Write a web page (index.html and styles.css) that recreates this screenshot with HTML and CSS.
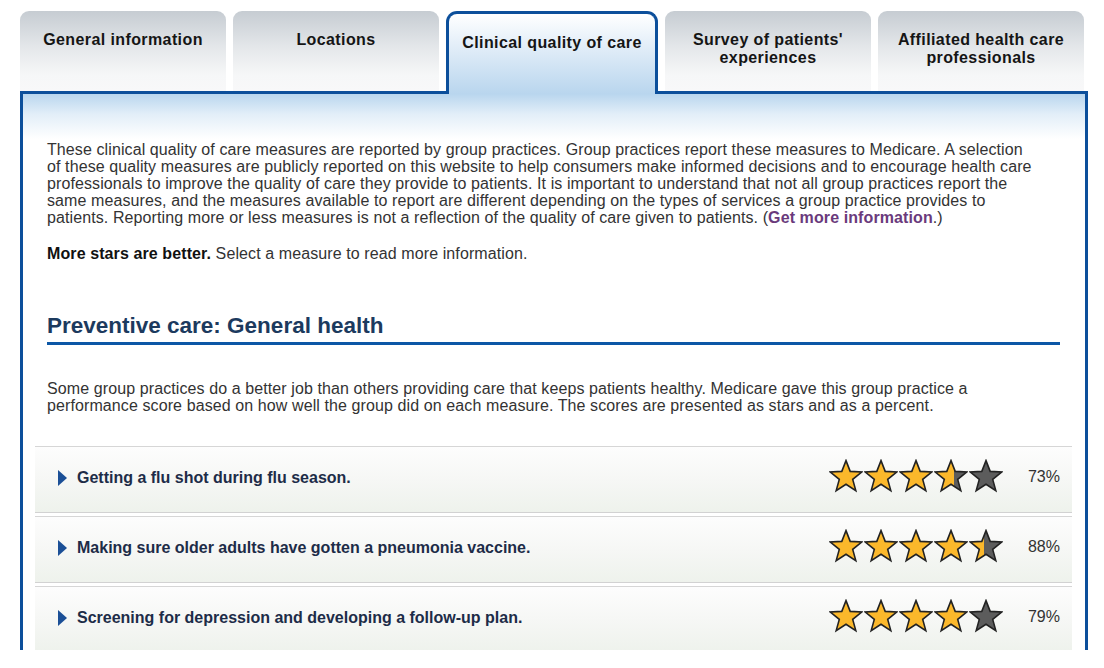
FILE: index.html
```html
<!DOCTYPE html>
<html lang="en">
<head>
<meta charset="utf-8">
<title>Clinical quality of care</title>
<link rel="stylesheet" href="styles.css">
</head>
<body>
<svg class="defs" width="0" height="0" aria-hidden="true">
  <defs>
    <polygon id="star-shape" points="17,1.6 21.2,12.4 32.7,13 23.7,20.4 26.8,31.6 17,25.3 7.2,31.6 10.3,20.4 1.3,13 12.8,12.4"/>
    <linearGradient id="fill-60" x1="0" x2="1" y1="0" y2="0">
      <stop offset="0.6" stop-color="#fbb82b"/><stop offset="0.6" stop-color="#5c5c5c"/>
    </linearGradient>
    <linearGradient id="fill-45" x1="0" x2="1" y1="0" y2="0">
      <stop offset="0.45" stop-color="#fbb82b"/><stop offset="0.45" stop-color="#5c5c5c"/>
    </linearGradient>
  </defs>
</svg>
<div class="page">
  <nav class="tabs">
    <div class="tab">General information</div>
    <div class="tab">Locations</div>
    <div class="tab active">Clinical quality of care</div>
    <div class="tab">Survey of patients'<br>experiences</div>
    <div class="tab">Affiliated health care<br>professionals</div>
  </nav>
  <section class="panel">
    <div class="intro">
      <p class="lead">These clinical quality of care measures are reported by group practices. Group practices report these measures to Medicare. A selection of these quality measures are publicly reported on this website to help consumers make informed decisions and to encourage health care professionals to improve the quality of care they provide to patients. It is important to understand that not all group practices report the same measures, and the measures available to report are different depending on the types of services a group practice provides to patients. Reporting more or less measures is not a reflection of the quality of care given to patients. (<a class="more" href="#">Get more information</a>.)</p>
      <p class="hint"><strong>More stars are better.</strong> Select a measure to read more information.</p>
      <h2 class="heading">Preventive care: General health</h2>
      <p class="desc">Some group practices do a better job than others providing care that keeps patients healthy. Medicare gave this group practice a performance score based on how well the group did on each measure. The scores are presented as stars and as a percent.</p>
    </div>
    <div class="rows">
      <div class="row">
        <span class="caret"></span>
        <span class="label">Getting a flu shot during flu season.</span>
        <span class="stars">
          <svg class="star" viewBox="0 0 34 34"><use href="#star-shape" class="gold"/></svg>
          <svg class="star" viewBox="0 0 34 34"><use href="#star-shape" class="gold"/></svg>
          <svg class="star" viewBox="0 0 34 34"><use href="#star-shape" class="gold"/></svg>
          <svg class="star" viewBox="0 0 34 34"><use href="#star-shape" fill="url(#fill-60)" class="outline"/></svg>
          <svg class="star" viewBox="0 0 34 34"><use href="#star-shape" class="grey"/></svg>
        </span>
        <span class="pct">73%</span>
      </div>
      <div class="row">
        <span class="caret"></span>
        <span class="label">Making sure older adults have gotten a pneumonia vaccine.</span>
        <span class="stars">
          <svg class="star" viewBox="0 0 34 34"><use href="#star-shape" class="gold"/></svg>
          <svg class="star" viewBox="0 0 34 34"><use href="#star-shape" class="gold"/></svg>
          <svg class="star" viewBox="0 0 34 34"><use href="#star-shape" class="gold"/></svg>
          <svg class="star" viewBox="0 0 34 34"><use href="#star-shape" class="gold"/></svg>
          <svg class="star" viewBox="0 0 34 34"><use href="#star-shape" fill="url(#fill-45)" class="outline"/></svg>
        </span>
        <span class="pct">88%</span>
      </div>
      <div class="row">
        <span class="caret"></span>
        <span class="label">Screening for depression and developing a follow-up plan.</span>
        <span class="stars">
          <svg class="star" viewBox="0 0 34 34"><use href="#star-shape" class="gold"/></svg>
          <svg class="star" viewBox="0 0 34 34"><use href="#star-shape" class="gold"/></svg>
          <svg class="star" viewBox="0 0 34 34"><use href="#star-shape" class="gold"/></svg>
          <svg class="star" viewBox="0 0 34 34"><use href="#star-shape" class="gold"/></svg>
          <svg class="star" viewBox="0 0 34 34"><use href="#star-shape" class="grey"/></svg>
        </span>
        <span class="pct">79%</span>
      </div>
    </div>
  </section>
</div>
</body>
</html>
```
FILE: styles.css
```css
* { box-sizing: border-box; }
html, body { margin: 0; padding: 0; background: #fff; }
body { font-family: "Liberation Sans", Arial, sans-serif; color: #333; }
.defs { position: absolute; width: 0; height: 0; overflow: hidden; }

.page {
  height: 650px;
  overflow: hidden;
  padding: 11px 0 0 20px;
}

.tabs {
  display: flex;
  align-items: flex-start;
  gap: 7px;
  width: 1064px;
  height: 80px;
  position: relative;
  z-index: 2;
}
.tab {
  flex: 1 1 0;
  height: 80px;
  border-radius: 9px 9px 0 0;
  background: linear-gradient(to bottom, #c6ccd2 0%, #e4e7ea 45%, #f6f7f8 80%, #f8f8f9 100%);
  padding-top: 20px;
  text-align: center;
  font-weight: bold;
  font-size: 16px;
  line-height: 18px;
  letter-spacing: 0.4px;
  color: #151515;
}
.tab.active {
  height: 83px;
  border: 3px solid #0c4f9b;
  border-bottom: none;
  border-radius: 11px 11px 0 0;
  background: linear-gradient(to bottom, #ffffff 0%, #e6f0f9 35%, #b9d6ee 100%);
}

.panel {
  width: 1068px;
  height: 600px;
  border: 3px solid #0c4f9b;
  border-bottom: none;
  background: linear-gradient(to bottom, #b9d6ee 0px, #e2eef8 20px, #ffffff 45px);
  position: relative;
  z-index: 1;
}

.intro { padding: 47px 25px 0 24px; }
.lead, .hint, .desc {
  margin: 0;
  font-size: 16px;
  line-height: 17px;
  letter-spacing: 0.1px;
}
.lead, .desc { padding-right: 22px; }
.more { color: #6a3a7c; font-weight: bold; text-decoration: none; }
.hint { margin-top: 19px; }
.hint strong { color: #111; }
.heading {
  margin: 52px 0 0;
  font-size: 22.5px;
  line-height: 24px;
  color: #1c3a5e;
  padding-bottom: 4px;
  border-bottom: 3px solid #0c57a6;
}
.desc { margin-top: 35px; }

.rows { padding: 32px 13px 0 12px; }
.row {
  display: flex;
  align-items: center;
  height: 67px;
  padding: 0 12px 7px 23px;
  margin-bottom: 3px;
  border-top: 1px solid #d6d6d6;
  border-bottom: 1px solid #d2d2d2;
  background: linear-gradient(to bottom, #fdfdfd 0%, #f6f7f5 50%, #eef2ec 100%);
}
.caret {
  width: 0; height: 0;
  border-top: 8px solid transparent;
  border-bottom: 8px solid transparent;
  border-left: 9px solid #1b4f96;
  margin-right: 10px;
  margin-top: 4px;
}
.label {
  flex: 1;
  font-weight: bold;
  font-size: 16px;
  color: #1d2c48;
  padding-top: 4px;
}
.stars { display: flex; gap: 1px; }
.star { width: 34px; height: 34px; display: block; }
.gold { fill: #fbb82b; stroke: #222; stroke-width: 1.6; stroke-linejoin: miter; }
.grey { fill: #5c5c5c; stroke: #222; stroke-width: 1.6; stroke-linejoin: miter; }
.outline { stroke: #222; stroke-width: 1.6; stroke-linejoin: miter; }
.pct {
  width: 45px;
  margin-left: 12px;
  text-align: right;
  font-size: 16px;
  color: #333;
  padding-top: 2px;
}
```
